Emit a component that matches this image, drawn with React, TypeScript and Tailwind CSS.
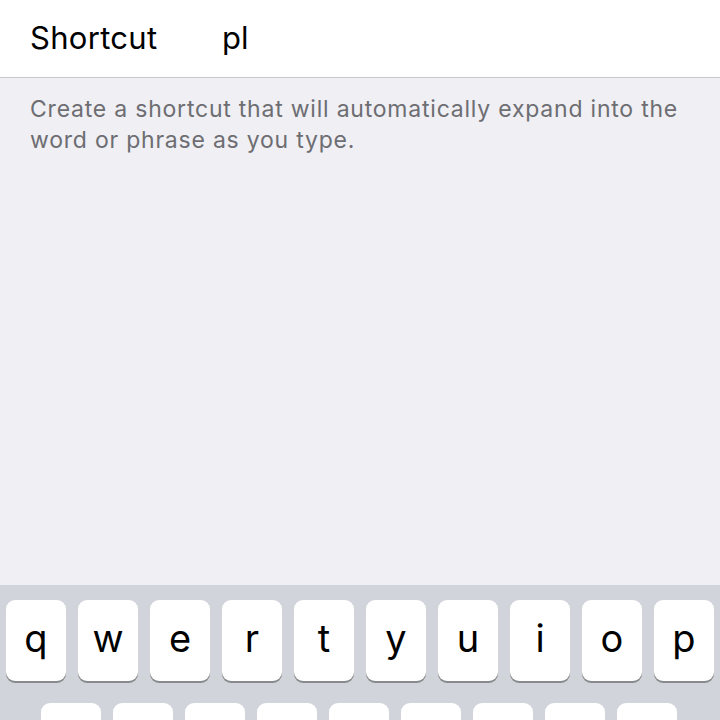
import React from 'react';

const rowOne = ['q', 'w', 'e', 'r', 't', 'y', 'u', 'i', 'o', 'p'];
const rowTwo = ['a', 's', 'd', 'f', 'g', 'h', 'j', 'k', 'l'];

const Key: React.FC<{ label: string }> = ({ label }) => (
  <div className="w-[60px] h-[81px] shrink-0 rounded-[9px] bg-white shadow-[0_2px_0_#898a8d] flex items-center justify-center text-[38px] text-black leading-none pb-[6px]">
    {label}
  </div>
);

export default function App() {
  return (
    <div
      className="w-[720px] h-[720px] overflow-hidden bg-[#efeff4] flex flex-col"
      style={{ fontFamily: 'Inter, "Noto Sans", sans-serif' }}
    >
      {/* Shortcut field */}
      <div className="h-[78px] bg-white border-b border-[#c8c7cc] flex items-center pl-[30px] shrink-0">
        <span className="w-[192px] text-[31px] text-black tracking-[0.3px]">Shortcut</span>
        <span className="text-[31px] text-black">pl</span>
      </div>

      <p className="pl-[30px] pr-[20px] pt-[16px] text-[23px] leading-[31px] tracking-[0.78px] text-[#6d6d72]">
        Create a shortcut that will automatically expand into the word or phrase as you type.
      </p>

      <div className="flex-1" />

      {/* Keyboard */}
      <div className="h-[135px] bg-[#d1d4da] shrink-0 pt-[15px] flex flex-col gap-[22px]">
        <div className="flex gap-[12px] px-[6px]">
          {rowOne.map((k) => (
            <Key key={k} label={k} />
          ))}
        </div>
        <div className="flex gap-[12px] pl-[41px]">
          {rowTwo.map((k) => (
            <Key key={k} label={k} />
          ))}
        </div>
      </div>
    </div>
  );
}
